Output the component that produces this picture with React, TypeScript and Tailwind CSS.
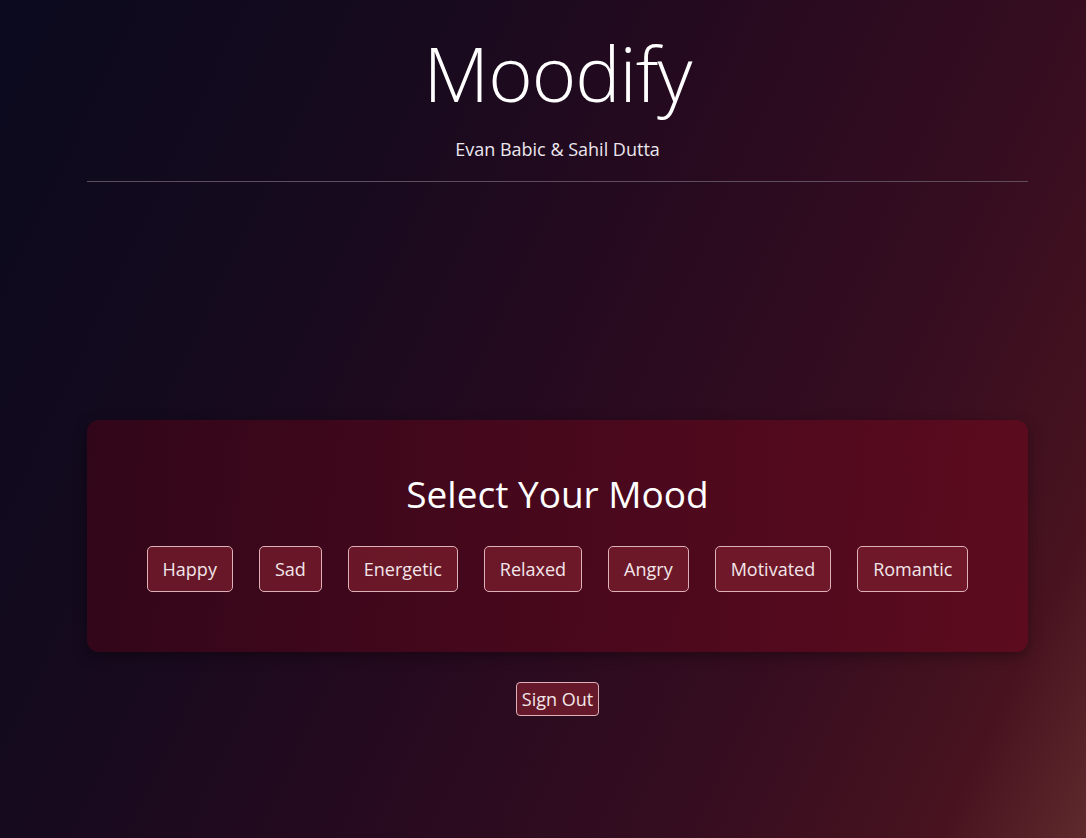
import React from 'react';

const moods = ['Happy', 'Sad', 'Energetic', 'Relaxed', 'Angry', 'Motivated', 'Romantic'];

const App: React.FC = () => {
  return (
    <div
      className="min-h-[838px] w-full bg-[linear-gradient(115deg,#0b0a1e_0%,#150a1e_26%,#260a1f_50%,#360d20_73%,#48131f_90%,#5e2a2c_100%)] text-white"
      style={{ fontFamily: '"Open Sans", "Noto Sans", sans-serif' }}
    >
      <div className="ml-[87px] w-[941px] flex flex-col items-center">
        {/* Header */}
        <h1 className="mt-[27px] text-[76px] font-light leading-[92px] tracking-[-1px]">Moodify</h1>
        <p className="mt-[18px] text-[18px] leading-[24px] text-[#ece6ee]">Evan Babic &amp; Sahil Dutta</p>
        <div className="mt-[20px] h-px w-full bg-[#5e4d5d]" />

        {/* Mood card */}
        <div className="mt-[238px] w-full rounded-xl bg-[linear-gradient(90deg,rgba(62,4,24,0.72),rgba(96,10,30,0.85))] px-6 pt-[51px] pb-[60px] flex flex-col items-center shadow-[0_4px_14px_rgba(0,0,0,0.35)]">
          <h2 className="text-[37px] leading-[46px] font-normal">Select Your Mood</h2>
          <div className="mt-[29px] flex gap-[26px]">
            {moods.map((m) => (
              <button
                key={m}
                className="h-[46px] rounded-[5px] border border-[#dcb1ba] bg-[rgba(120,30,45,0.75)] px-[15px] text-[18px] text-[#f3e6ea]"
              >
                {m}
              </button>
            ))}
          </div>
        </div>

        <button className="mt-[30px] h-[34px] rounded-[4px] border border-[#dcb1ba] bg-[rgba(120,30,45,0.75)] px-[5px] text-[18px] text-[#f3e6ea]">
          Sign Out
        </button>
      </div>
    </div>
  );
};

export default App;
